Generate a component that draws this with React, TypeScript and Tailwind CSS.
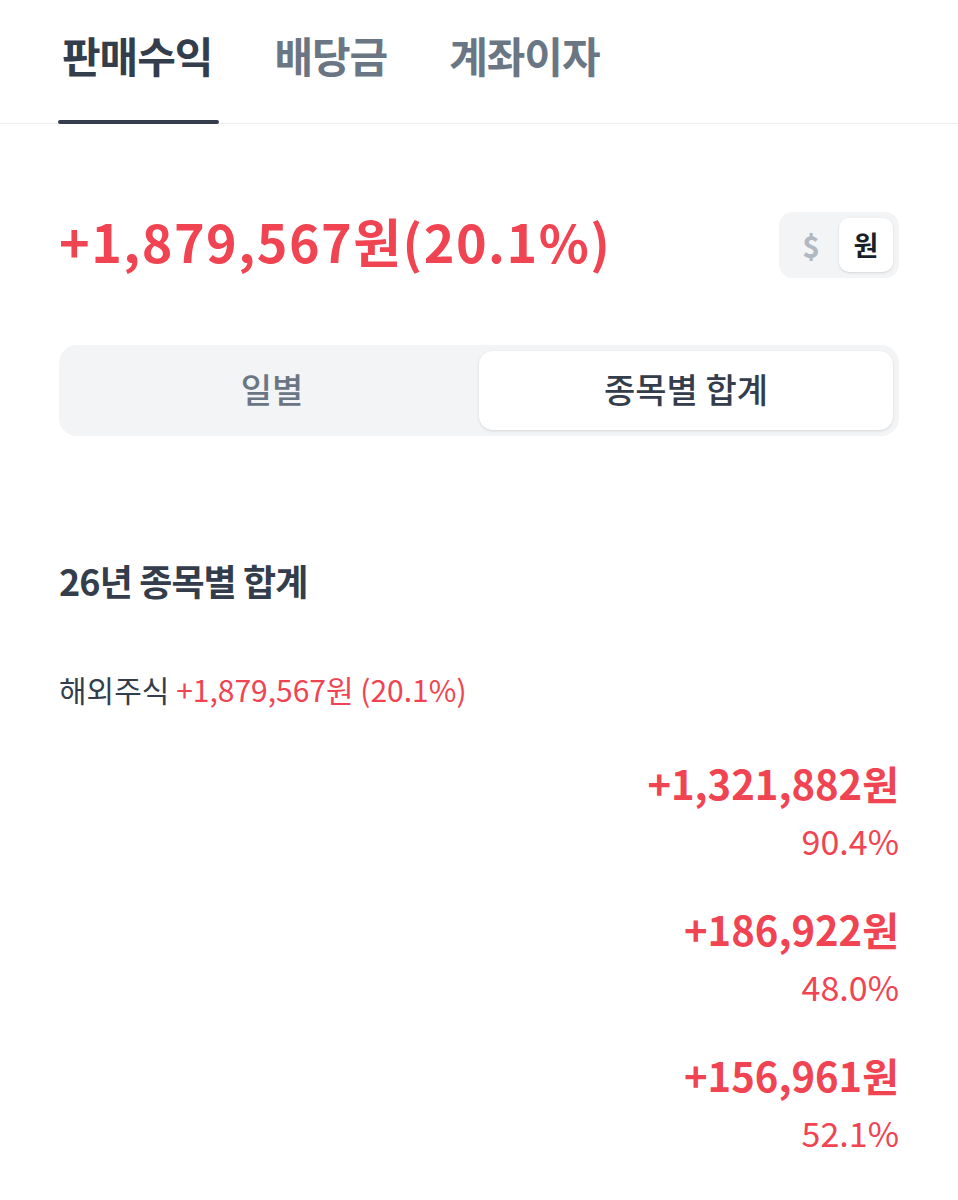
import { useState } from 'react';

const rows = [
  { amount: '+1,321,882원', rate: '90.4%' },
  { amount: '+186,922원', rate: '48.0%' },
  { amount: '+156,961원', rate: '52.1%' },
];

const tabs = ['판매수익', '배당금', '계좌이자'];

export default function App() {
  const [tab, setTab] = useState(0);
  const [unit, setUnit] = useState<'usd' | 'krw'>('krw');
  const [mode, setMode] = useState<'daily' | 'stock'>('stock');

  return (
    <div
      className="min-h-screen w-[958px] bg-white text-[#333d4b]"
      style={{ fontFamily: '"Noto Sans CJK KR", "Noto Sans", sans-serif' }}
    >
      {/* Top tabs */}
      <div className="flex gap-[56px] border-b border-[#eceef0] px-[59px]">
        {tabs.map((t, i) => (
          <button
            key={t}
            onClick={() => setTab(i)}
            className={
              'relative h-[123px] px-[3px] pb-[14px] text-[42px] font-bold leading-[52px] tracking-tight ' +
              (tab === i ? 'text-[#333d4b]' : 'text-[#6b7684]')
            }
          >
            {t}
            {tab === i && (
              <span className="absolute -bottom-[1px] -left-[1px] -right-[4px] h-[4px] rounded-full bg-[#333d4b]" />
            )}
          </button>
        ))}
      </div>

      <div className="px-[59px]">
        {/* Total */}
        <div className="mt-[87px] flex items-center justify-between">
          <div className="pb-[8px] text-[52px] font-bold leading-[60px] tracking-[1.5px] text-[#f04452]">
            +1,879,567원(20.1%)
          </div>
          <div className="flex h-[66px] w-[120px] items-center gap-[2px] rounded-[14px] bg-[#f2f4f6] p-[6px]">
            <button
              onClick={() => setUnit('usd')}
              className={
                'flex h-full flex-1 items-center justify-center rounded-[10px] text-[30px] font-bold ' +
                (unit === 'usd' ? 'bg-white text-[#191f28] shadow-sm' : 'text-[#b0b8c1]')
              }
            >
              $
            </button>
            <button
              onClick={() => setUnit('krw')}
              className={
                'flex h-full w-[54px] items-center justify-center rounded-[10px] text-[27px] font-bold ' +
                (unit === 'krw' ? 'bg-white text-[#191f28] shadow-sm' : 'text-[#b0b8c1]')
              }
            >
              원
            </button>
          </div>
        </div>

        {/* Segmented control */}
        <div className="mt-[66px] flex h-[91px] rounded-[18px] bg-[#f2f4f6] p-[6px]">
          <button
            onClick={() => setMode('daily')}
            className={
              'flex-1 rounded-[14px] pb-[4px] text-[34px] font-medium ' +
              (mode === 'daily' ? 'bg-white text-[#333d4b] shadow-[0_1px_3px_rgba(0,0,0,0.12)]' : 'text-[#6b7684]')
            }
          >
            일별
          </button>
          <button
            onClick={() => setMode('stock')}
            className={
              'flex-1 rounded-[14px] pb-[4px] text-[34px] font-medium ' +
              (mode === 'stock' ? 'bg-white text-[#333d4b] shadow-[0_1px_3px_rgba(0,0,0,0.12)]' : 'text-[#6b7684]')
            }
          >
            종목별 합계
          </button>
        </div>

        {/* Summary */}
        <div className="mt-[122px] text-[36px] font-bold leading-[44px] tracking-tight text-[#333d4b]">
          26년 종목별 합계
        </div>
        <div className="mt-[67px] text-[30px] leading-[40px] text-[#333d4b]">
          해외주식 <span className="text-[#f04452]">+1,879,567원 (20.1%)</span>
        </div>

        {/* Per-stock rows */}
        <div className="mt-[45px] flex flex-col gap-[30px]">
          {rows.map((r) => (
            <div key={r.amount} className="flex flex-col items-end text-[#f04452]">
              <div className="text-[40px] font-bold leading-[58px]">{r.amount}</div>
              <div className="text-[34px] leading-[58px]">{r.rate}</div>
            </div>
          ))}
        </div>
      </div>
    </div>
  );
}
